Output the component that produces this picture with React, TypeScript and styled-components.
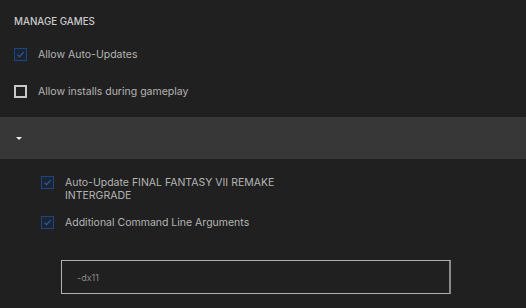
import React, { FC, useState } from "react";
import styled, { createGlobalStyle } from "styled-components";

const GlobalStyle = createGlobalStyle`
  html, body {
    margin: 0;
    padding: 0;
    background: #202020;
  }
  body {
    font-family: Inter, "Noto Sans", sans-serif;
    -webkit-font-smoothing: antialiased;
  }
`;

interface ICheckProps {
  label: string;
  checked: boolean;
  onToggle: () => void;
}

/**
 * Checkbox with a label beside it
 */
const CheckRow: FC<ICheckProps> = ({ label, checked, onToggle }) => (
  <Row onClick={onToggle}>
    <Box checked={checked}>
      {checked && (
        <svg width="9" height="9" viewBox="0 0 9 9">
          <path d="M1.5 4.6 L3.6 6.6 L7.6 2.2" fill="none" stroke="#335f98" strokeWidth="1.1" />
        </svg>
      )}
    </Box>
    <Label>{label}</Label>
  </Row>
);

export default function App() {
  const [autoUpdate, setAutoUpdate] = useState(true);
  const [installs, setInstalls] = useState(false);
  const [gameUpdate, setGameUpdate] = useState(true);
  const [cmdArgs, setCmdArgs] = useState(true);
  const [args, setArgs] = useState("-dx11");

  return (
    <Page>
      <GlobalStyle />
      <Section>
        <Heading>Manage Games</Heading>
        <Options>
          <CheckRow label="Allow Auto-Updates" checked={autoUpdate} onToggle={() => setAutoUpdate(!autoUpdate)} />
          <CheckRow label="Allow installs during gameplay" checked={installs} onToggle={() => setInstalls(!installs)} />
        </Options>
      </Section>
      <GameBar>
        <Caret />
      </GameBar>
      <GameSettings>
        <CheckRow
          label="Auto-Update FINAL FANTASY VII REMAKE INTERGRADE"
          checked={gameUpdate}
          onToggle={() => setGameUpdate(!gameUpdate)}
        />
        <CheckRow
          label="Additional Command Line Arguments"
          checked={cmdArgs}
          onToggle={() => setCmdArgs(!cmdArgs)}
        />
        <ArgsInput value={args} onChange={e => setArgs(e.currentTarget.value)} />
      </GameSettings>
    </Page>
  );
}

const Page = styled.div`
  width: 526px;
  height: 308px;
  overflow: hidden;
  background: #202020;
`;

const Section = styled.div`
  padding: 16px 14px 0;
  height: 101px;
`;

const Heading = styled.div`
  font-size: 9.8px;
  font-weight: 500;
  text-transform: uppercase;
  color: #cacaca;
  line-height: 12px;
`;

const Options = styled.div`
  display: grid;
  grid-row-gap: 24px;
  margin-top: 20px;
`;

const Row = styled.div`
  display: grid;
  grid-template-columns: 13px 1fr;
  grid-gap: 11px;
  align-items: start;
  cursor: pointer;
`;

const Box = styled.div<{ checked: boolean }>`
  width: 13px;
  height: 13px;
  box-sizing: border-box;
  display: flex;
  align-items: center;
  justify-content: center;

  border: ${p => (p.checked ? "1.5px solid #1c4680" : "2px solid #c8c8c8")};
  background: ${p => (p.checked ? "#1a2434" : "transparent")};
`;

const Label = styled.div`
  font-size: 10.5px;
  line-height: 13px;
  color: #b4b4b4;
  max-width: 225px;
`;

const GameBar = styled.div`
  height: 42px;
  background: #373737;
  display: flex;
  align-items: center;
  padding-left: 16px;
`;

const Caret = styled.div`
  width: 0;
  height: 0;
  border-left: 3px solid transparent;
  border-right: 3px solid transparent;
  border-top: 3px solid #f0f0f0;
`;

const GameSettings = styled.div`
  padding: 17px 0 0 41px;
  display: grid;
  grid-template-columns: 411px;
  grid-row-gap: 14px;

  ${Row} {
    grid-gap: 11px;
  }
`;

const ArgsInput = styled.input`
  margin: 17px 0 0 20px;
  width: 390px;
  height: 34px;
  box-sizing: border-box;
  padding: 0 15px;

  background: #202020;
  border: 1px solid #b0b0b0;
  border-right: 2px solid #8a8a8a;
  outline: none;

  font-family: Inter, "Noto Sans", sans-serif;
  font-size: 9px;
  color: #8a8a8a;
  caret-color: #d0d0d0;
`;
